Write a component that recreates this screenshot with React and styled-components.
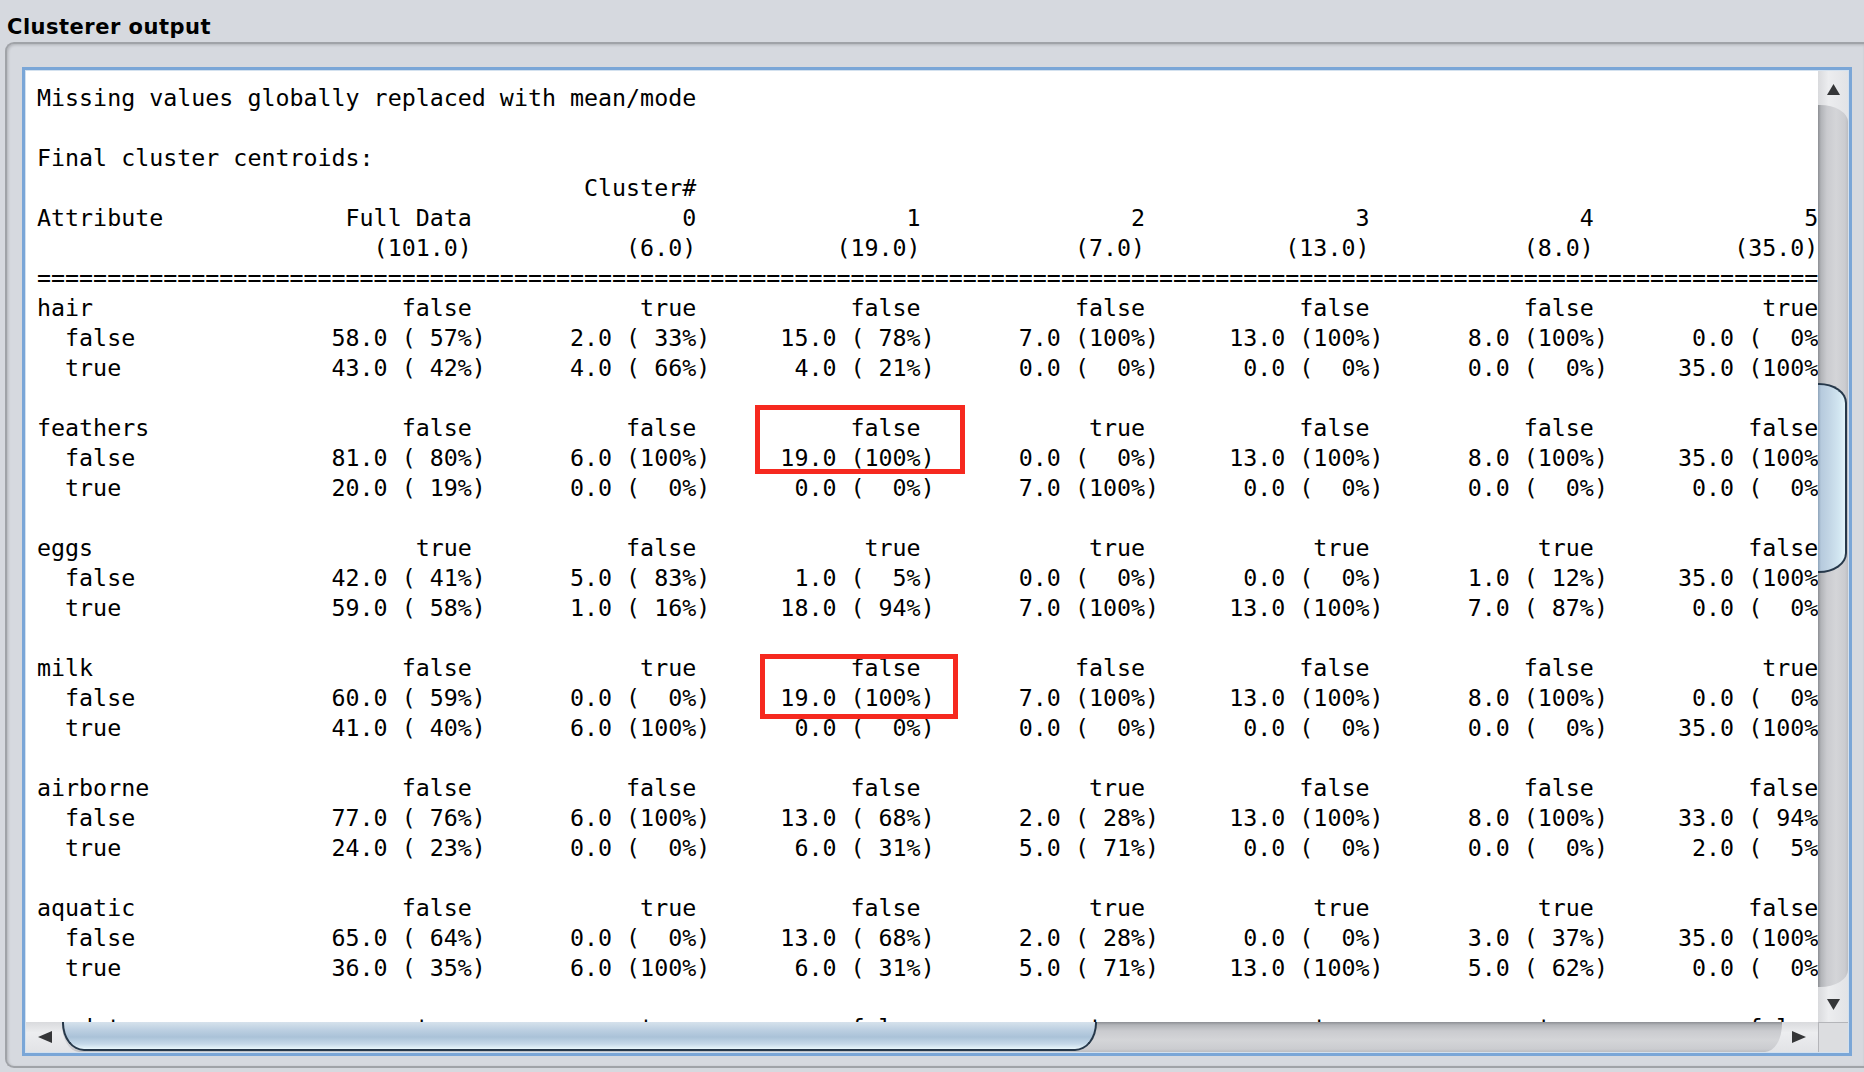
import React from "react";
import styled, { createGlobalStyle } from "styled-components";

const GlobalStyle = createGlobalStyle`
  html, body {
    margin: 0;
    padding: 0;
    background: #d6d9df;
  }
  body {
    overflow: hidden;
  }
`;

const Page = styled.div`
  width: 1864px;
  height: 1072px;
  background: #d6d9df;
  display: flex;
  flex-direction: column;
  overflow: hidden;
`;

const Title = styled.h2`
  margin: 0;
  height: 42px;
  box-sizing: border-box;
  padding: 15px 0 0 7px;
  font-family: "DejaVu Sans", "Liberation Sans", sans-serif;
  font-weight: bold;
  font-size: 21px;
  line-height: 24px;
  letter-spacing: 0.5px;
  color: #000;
`;

const Panel = styled.section`
  margin-left: 5px;
  height: 1026px;
  box-sizing: border-box;
  border: 2px solid #a0a3a8;
  border-right: none;
  border-radius: 9px 0 0 9px;
  padding: 23px 0 10px 15px;
  box-shadow: inset 1px 1px 3px rgba(0, 0, 0, 0.18);
`;

const ScrollPane = styled.div`
  width: 1830px;
  height: 989px;
  box-sizing: border-box;
  border: 3px solid #7aa6d7;
  padding: 1px;
  background: #d3e1ef;
  display: grid;
  grid-template-columns: 1792px 30px;
  grid-template-rows: 951px 30px;
`;

const Viewport = styled.div`
  grid-column: 1;
  grid-row: 1;
  position: relative;
  overflow: hidden;
  background: #ffffff;
`;

const Output = styled.pre`
  margin: 0;
  padding: 12px 0 0 11px;
  font-family: "DejaVu Sans Mono", "Liberation Mono", monospace;
  font-size: 23.3px;
  line-height: 30px;
  white-space: pre;
  color: #000;
`;

const Highlight = styled.div`
  position: absolute;
  left: ${(p) => p.$x}px;
  top: ${(p) => p.$y}px;
  width: ${(p) => p.$w}px;
  height: ${(p) => p.$h}px;
  box-sizing: border-box;
  border: 5px solid #f6291f;
  pointer-events: none;
`;

const VScrollbar = styled.div`
  grid-column: 2;
  grid-row: 1;
  display: flex;
  flex-direction: column;
  background: linear-gradient(to right, #d9dadd 0, #ecedef 35%, #e2e3e6 100%);
`;

const HScrollbar = styled.div`
  grid-column: 1;
  grid-row: 2;
  display: flex;
  flex-direction: row;
  background: linear-gradient(to bottom, #d9dadd 0, #ecedef 35%, #e2e3e6 100%);
`;

const ArrowButton = styled.div`
  flex: 0 0 ${(p) => p.$size}px;
  display: flex;
  align-items: center;
  justify-content: center;
  padding: ${(p) => p.$pad || "0"};
  box-sizing: border-box;
`;

const VTrack = styled.div`
  flex: 1;
  position: relative;
  background: linear-gradient(
    to right,
    #8c8e93 0px,
    #b2b4b8 3px,
    #cacbcf 9px,
    #d4d5d8 18px,
    #cbccd0 27px,
    #bcbdc1 30px
  );
  border-radius: 0 28px 28px 0 / 0 17px 17px 0;
`;

const HTrack = styled.div`
  flex: 1;
  position: relative;
  background: linear-gradient(
    to bottom,
    #8c8e93 0px,
    #b2b4b8 3px,
    #cacbcf 9px,
    #d4d5d8 18px,
    #cbccd0 27px,
    #bcbdc1 30px
  );
  border-radius: 0 0 17px 17px / 0 0 28px 28px;
`;

const VThumb = styled.div`
  position: absolute;
  left: 0;
  right: 1px;
  box-sizing: border-box;
  border: 2px solid #26384a;
  border-left: none;
  border-radius: 0 28px 28px 0 / 0 20px 20px 0;
  background: linear-gradient(
    to right,
    #8ea4ba 0px,
    #b6cadd 3px,
    #c2d5e5 11px,
    #d2e6f1 21px,
    #e3f4fa 100%
  );
`;

const HThumb = styled.div`
  position: absolute;
  top: 0;
  bottom: 1px;
  left: 0;
  box-sizing: border-box;
  border: 2px solid #26384a;
  border-top: none;
  border-radius: 0 0 22px 22px / 0 0 28px 28px;
  background: linear-gradient(
    to bottom,
    #d6e2ec 0px,
    #bccfe1 8px,
    #aac2d8 15px,
    #c5d9e9 22px,
    #e9f7fc 100%
  );
`;

const Corner = styled.div`
  grid-column: 2;
  grid-row: 2;
  box-sizing: border-box;
  background: #dcdde0;
  border-top: 1px solid #b4b5b9;
  border-left: 1px solid #b4b5b9;
`;

const ArrowGlyph = styled.svg`
  display: block;
  fill: #353638;
`;

function Arrow({ dir }) {
  const pts = {
    up: "0,11 6.5,0 13,11",
    down: "0,0 13,0 6.5,11",
    left: "0,6 14,0 14,12",
    right: "0,0 14,6 0,12",
  }[dir];
  const horizontal = dir === "left" || dir === "right";
  return (
    <ArrowGlyph
      width={horizontal ? 14 : 13}
      height={horizontal ? 12 : 11}
      viewBox={horizontal ? "0 0 14 12" : "0 0 13 11"}
    >
      <polygon points={pts} />
    </ArrowGlyph>
  );
}

/* ---------- clusterer text ---------- */

const MODE_ENDS = [31, 47, 63, 79, 95, 111, 127];
const COUNT_ENDS = [32, 48, 64, 80, 96, 112, 128];

function row(label, cells, ends) {
  let s = label;
  cells.forEach((c, i) => {
    s = s.padEnd(ends[i] - c.length, " ") + c;
  });
  return s;
}

const cnt = ([n, p]) => `${n.toFixed(1)} (${String(p).padStart(3)}%)`;

const ATTRS = [
  {
    name: "hair",
    modes: ["false", "true", "false", "false", "false", "false", "true"],
    values: [
      ["false", [[58, 57], [2, 33], [15, 78], [7, 100], [13, 100], [8, 100], [0, 0]]],
      ["true", [[43, 42], [4, 66], [4, 21], [0, 0], [0, 0], [0, 0], [35, 100]]],
    ],
  },
  {
    name: "feathers",
    modes: ["false", "false", "false", "true", "false", "false", "false"],
    values: [
      ["false", [[81, 80], [6, 100], [19, 100], [0, 0], [13, 100], [8, 100], [35, 100]]],
      ["true", [[20, 19], [0, 0], [0, 0], [7, 100], [0, 0], [0, 0], [0, 0]]],
    ],
  },
  {
    name: "eggs",
    modes: ["true", "false", "true", "true", "true", "true", "false"],
    values: [
      ["false", [[42, 41], [5, 83], [1, 5], [0, 0], [0, 0], [1, 12], [35, 100]]],
      ["true", [[59, 58], [1, 16], [18, 94], [7, 100], [13, 100], [7, 87], [0, 0]]],
    ],
  },
  {
    name: "milk",
    modes: ["false", "true", "false", "false", "false", "false", "true"],
    values: [
      ["false", [[60, 59], [0, 0], [19, 100], [7, 100], [13, 100], [8, 100], [0, 0]]],
      ["true", [[41, 40], [6, 100], [0, 0], [0, 0], [0, 0], [0, 0], [35, 100]]],
    ],
  },
  {
    name: "airborne",
    modes: ["false", "false", "false", "true", "false", "false", "false"],
    values: [
      ["false", [[77, 76], [6, 100], [13, 68], [2, 28], [13, 100], [8, 100], [33, 94]]],
      ["true", [[24, 23], [0, 0], [6, 31], [5, 71], [0, 0], [0, 0], [2, 5]]],
    ],
  },
  {
    name: "aquatic",
    modes: ["false", "true", "false", "true", "true", "true", "false"],
    values: [
      ["false", [[65, 64], [0, 0], [13, 68], [2, 28], [0, 0], [3, 37], [35, 100]]],
      ["true", [[36, 35], [6, 100], [6, 31], [5, 71], [13, 100], [5, 62], [0, 0]]],
    ],
  },
  {
    name: "predator",
    modes: ["true", "true", "false", "true", "true", "true", "false"],
    values: [
      ["false", [[45, 44], [1, 16], [13, 68], [2, 28], [3, 23], [4, 50], [22, 62]]],
      ["true", [[56, 55], [5, 83], [6, 31], [5, 71], [10, 76], [4, 50], [13, 37]]],
    ],
  },
];

function buildText() {
  const lines = [
    "Missing values globally replaced with mean/mode",
    "",
    "Final cluster centroids:",
    row("", ["Cluster#"], [47]),
    row("Attribute", ["Full Data", "0", "1", "2", "3", "4", "5"], MODE_ENDS),
    row("", ["(101.0)", "(6.0)", "(19.0)", "(7.0)", "(13.0)", "(8.0)", "(35.0)"], MODE_ENDS),
    "=".repeat(230),
  ];
  ATTRS.forEach((a) => {
    lines.push(row(a.name, a.modes, MODE_ENDS));
    a.values.forEach(([v, counts]) => {
      lines.push(row("  " + v, counts.map(cnt), COUNT_ENDS));
    });
    lines.push("");
  });
  return lines.join("\n");
}

const TEXT = buildText();

/* scroll state of the pane (fractions of the track) */
const V_SCROLL = { start: 0.3149, size: 0.2154 };
const H_SCROLL = { start: 0, size: 0.6017 };

const HIGHLIGHTS = [
  { x: 728.5, y: 334, w: 210.5, h: 69 },
  { x: 734, y: 583, w: 198, h: 65 },
];

export default function App() {
  return (
    <>
      <GlobalStyle />
      <Page>
        <Title>Clusterer output</Title>
        <Panel>
          <ScrollPane>
            <Viewport>
              <Output>{TEXT}</Output>
              {HIGHLIGHTS.map((b, i) => (
                <Highlight key={i} $x={b.x} $y={b.y} $w={b.w} $h={b.h} />
              ))}
            </Viewport>
            <VScrollbar>
              <ArrowButton $size={34} $pad="3px 0 0 0">
                <Arrow dir="up" />
              </ArrowButton>
              <VTrack>
                <VThumb
                  style={{
                    top: `${V_SCROLL.start * 100}%`,
                    height: `${V_SCROLL.size * 100}%`,
                  }}
                />
              </VTrack>
              <ArrowButton $size={35} $pad="0 0 1px 0">
                <Arrow dir="down" />
              </ArrowButton>
            </VScrollbar>
            <HScrollbar>
              <ArrowButton $size={36} $pad="0 0 0 1px">
                <Arrow dir="left" />
              </ArrowButton>
              <HTrack>
                <HThumb
                  style={{
                    left: `${H_SCROLL.start * 100}%`,
                    width: `${H_SCROLL.size * 100}%`,
                  }}
                />
              </HTrack>
              <ArrowButton $size={36} $pad="0 2px 0 0">
                <Arrow dir="right" />
              </ArrowButton>
            </HScrollbar>
            <Corner />
          </ScrollPane>
        </Panel>
      </Page>
    </>
  );
}
